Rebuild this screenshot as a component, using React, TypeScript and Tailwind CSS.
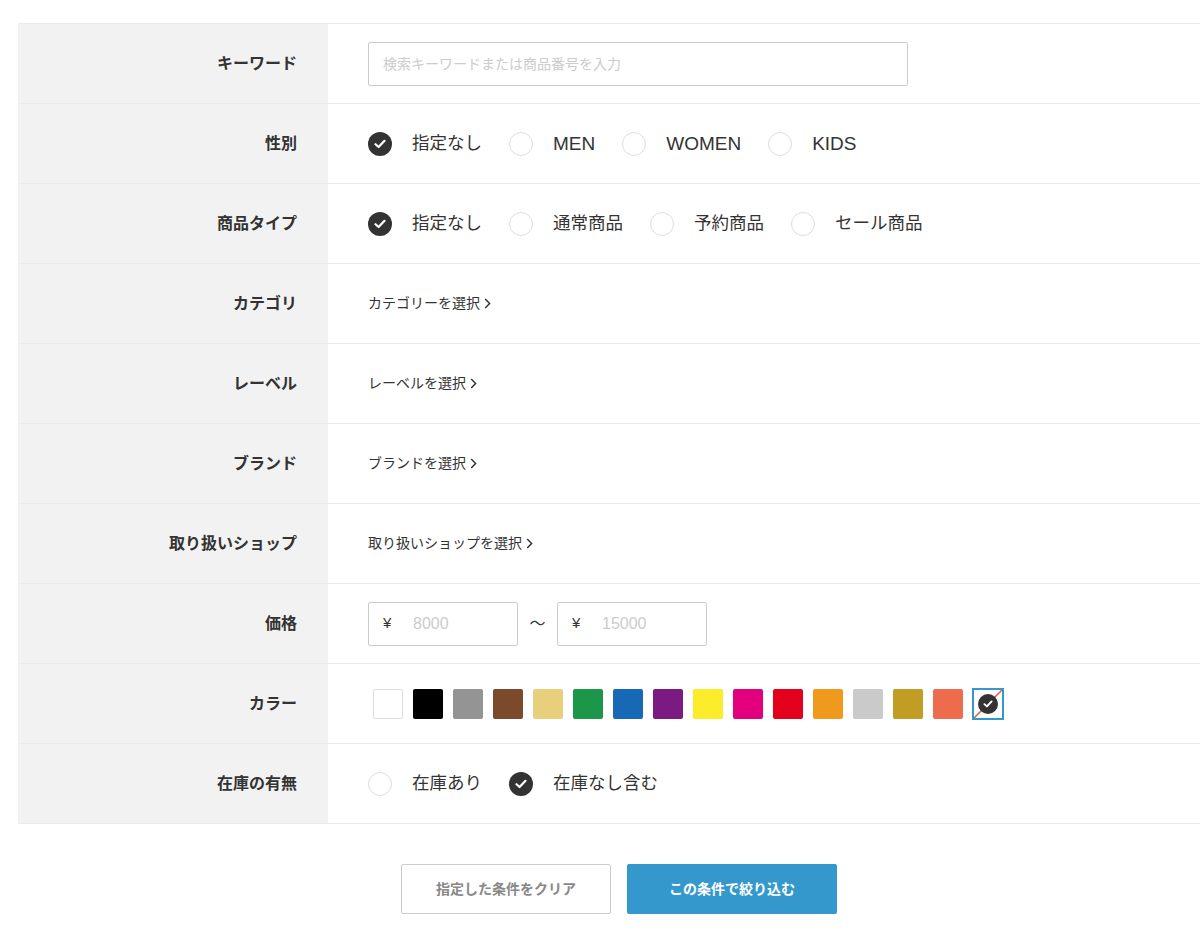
import React from 'react';

const font = { fontFamily: '"Liberation Sans", "Noto Sans CJK JP", sans-serif' };

const Check = ({ on }: { on: boolean }) =>
  on ? (
    <span className="w-6 h-6 rounded-full bg-[#333] flex items-center justify-center shrink-0">
      <svg width="12" height="10" viewBox="0 0 12 10" fill="none">
        <path d="M1.5 5.2 L4.6 8 L10.5 1.8" stroke="#fff" strokeWidth="2.2" strokeLinecap="round" strokeLinejoin="round" />
      </svg>
    </span>
  ) : (
    <span className="w-6 h-6 rounded-full border border-[#ddd] bg-white shrink-0" />
  );

// latin labels render wider in the original font, so bump them a little
const isLatin = (s: string) => /^[A-Z]+$/.test(s);

const RadioGroup = ({ items, selected }: { items: string[]; selected: number }) => (
  <div className="flex items-center gap-[27px]">
    {items.map((label, i) => (
      <label key={label} className="flex items-center gap-5 cursor-pointer">
        <Check on={i === selected} />
        <span className={`${isLatin(label) ? 'text-[19px]' : 'text-[17.5px]'} text-[#333] leading-none`}>{label}</span>
      </label>
    ))}
  </div>
);

const SelectLink = ({ text }: { text: string }) => (
  <a className="flex items-center gap-1 text-[14px] text-[#333] cursor-pointer">
    {text}
    <svg width="7" height="11" viewBox="0 0 7 11" fill="none">
      <path d="M1.2 1 L5.6 5.5 L1.2 10" stroke="#333" strokeWidth="1.5" />
    </svg>
  </a>
);

const Row = ({ label, children }: { label: string; children: React.ReactNode }) => (
  <div className="flex h-20 border-b border-[#ebebeb]">
    <div className="w-[310px] shrink-0 bg-[#f2f2f2] flex items-center justify-end pr-[31px]">
      <span className="text-[16px] font-bold text-[#333]">{label}</span>
    </div>
    <div className="flex-1 flex items-center pl-10">{children}</div>
  </div>
);

const colors = [
  '#ffffff', '#000000', '#949494', '#7b4a2c', '#e8cf7c', '#1c9648', '#1769b5', '#7b1a81',
  '#fced2c', '#e2007f', '#e2001c', '#ef9a1e', '#cacaca', '#c29d25', '#ec6c4c',
];

const PriceBox = ({ value }: { value: string }) => (
  <div className="w-[150px] h-11 border border-[#ccc] rounded-[2px] flex items-center pl-[14px] text-[16px]">
    <span className="text-[#333] w-[30px] text-[15px]">¥</span>
    <span className="text-[#ccc]">{value}</span>
  </div>
);

export default function App() {
  return (
    <div className="bg-white min-h-[940px] pt-[23px] pl-[18px]" style={font}>
      <div className="border-t border-[#ebebeb]">
        <Row label="キーワード">
          <input
            className="w-[540px] h-11 border border-[#ccc] rounded-[2px] px-[14px] text-[14px] outline-none placeholder:text-[#ccc]"
            placeholder="検索キーワードまたは商品番号を入力"
          />
        </Row>
        <Row label="性別">
          <RadioGroup items={['指定なし', 'MEN', 'WOMEN', 'KIDS']} selected={0} />
        </Row>
        <Row label="商品タイプ">
          <RadioGroup items={['指定なし', '通常商品', '予約商品', 'セール商品']} selected={0} />
        </Row>
        <Row label="カテゴリ">
          <SelectLink text="カテゴリーを選択" />
        </Row>
        <Row label="レーベル">
          <SelectLink text="レーベルを選択" />
        </Row>
        <Row label="ブランド">
          <SelectLink text="ブランドを選択" />
        </Row>
        <Row label="取り扱いショップ">
          <SelectLink text="取り扱いショップを選択" />
        </Row>
        <Row label="価格">
          <div className="flex items-center">
            <PriceBox value="8000" />
            <span className="w-[39px] text-center text-[#333] text-[16px]">〜</span>
            <PriceBox value="15000" />
          </div>
        </Row>
        <Row label="カラー">
          <div className="flex items-center gap-[10px] pl-[5px]">
            {colors.map((c, i) => (
              <span
                key={i}
                className={`w-[30px] h-[30px] rounded-[2px] ${i === 0 ? 'border border-[#ddd]' : ''}`}
                style={{ backgroundColor: c }}
              />
            ))}
            <span className="relative w-8 h-8 border-2 border-[#3399cc] bg-white flex items-center justify-center -ml-[1px]">
              <svg className="absolute inset-0" width="28" height="28" viewBox="0 0 28 28">
                <line x1="0" y1="28" x2="28" y2="0" stroke="#e5583a" strokeWidth="1.5" />
              </svg>
              <span className="relative w-[20px] h-[20px] rounded-full bg-[#333] flex items-center justify-center">
                <svg width="10" height="8" viewBox="0 0 12 10" fill="none">
                  <path d="M1.5 5.2 L4.6 8 L10.5 1.8" stroke="#fff" strokeWidth="2.4" strokeLinecap="round" strokeLinejoin="round" />
                </svg>
              </span>
            </span>
          </div>
        </Row>
        <Row label="在庫の有無">
          <RadioGroup items={['在庫あり', '在庫なし含む']} selected={1} />
        </Row>
      </div>
      <div className="flex justify-center gap-4 mt-10 pl-[20px]">
        <button className="w-[210px] h-[50px] border border-[#ccc] rounded-[2px] bg-white text-[14px] font-bold text-[#888]">
          指定した条件をクリア
        </button>
        <button className="w-[210px] h-[50px] rounded-[2px] bg-[#3598cc] text-[14px] font-bold text-white">
          この条件で絞り込む
        </button>
      </div>
    </div>
  );
}
